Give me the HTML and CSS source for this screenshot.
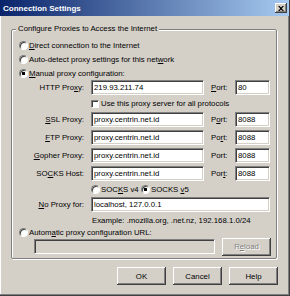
FILE: index.html
```html
<!DOCTYPE html>
<html>
<head>
    <title>Connection Settings</title>
    <link rel="stylesheet" href="styles.css">
</head>
<body>
    <div class="window">
        <div class="titlebar">
            <span class="title">Connection Settings</span>
            <span class="close">
                <svg width="6" height="5" viewBox="0 0 6 5"><path d="M0 0h1.5L3 1.6 4.5 0H6L3.8 2.5 6 5H4.5L3 3.4 1.5 5H0l2.2-2.5z" fill="#000"/></svg>
            </span>
        </div>

        <fieldset class="group">
            <legend>Configure Proxies to Access the Internet</legend>

            <label class="opt"><input type="radio" name="mode"><span><u>D</u>irect connection to the Internet</span></label>
            <label class="opt"><input type="radio" name="mode"><span>Auto-detect proxy settings for this net<u>w</u>ork</span></label>
            <label class="opt"><input type="radio" name="mode" checked><span><u>M</u>anual proxy configuration:</span></label>

            <div class="proxies">
                <span class="lbl">HTTP Pro<u>x</u>y:</span>
                <input class="field" type="text" value="219.93.211.74">
                <span><u>P</u>ort:</span>
                <input class="field" type="text" value="80">

                <label class="wide check"><input type="checkbox"><span>Use this proxy server for all protocols</span></label>

                <span class="lbl"><u>S</u>SL Proxy:</span>
                <input class="field" type="text" value="proxy.centrin.net.id">
                <span>P<u>o</u>rt:</span>
                <input class="field" type="text" value="8088">

                <span class="lbl"><u>F</u>TP Proxy:</span>
                <input class="field" type="text" value="proxy.centrin.net.id">
                <span>Po<u>r</u>t:</span>
                <input class="field" type="text" value="8088">

                <span class="lbl"><u>G</u>opher Proxy:</span>
                <input class="field" type="text" value="proxy.centrin.net.id">
                <span>Port:</span>
                <input class="field" type="text" value="8088">

                <span class="lbl">SO<u>C</u>KS Host:</span>
                <input class="field" type="text" value="proxy.centrin.net.id">
                <span>Por<u>t</u>:</span>
                <input class="field" type="text" value="8088">

                <div class="wide socks">
                    <label class="ver"><input type="radio" name="socks"><span>SOC<u>K</u>S v4</span></label>
                    <label class="ver"><input type="radio" name="socks" checked><span>SOCKS <u>v</u>5</span></label>
                </div>

                <span class="lbl"><u>N</u>o Proxy for:</span>
                <input class="field wide" type="text" value="localhost, 127.0.0.1">

                <span class="wide example">Example: .mozilla.org, .net.nz, 192.168.1.0/24</span>
            </div>

            <label class="opt short"><input type="radio" name="mode"><span>Autom<u>a</u>tic proxy configuration URL:</span></label>
            <div class="auto-url">
                <input class="field url" type="text" disabled>
                <button class="btn" disabled>R<u>e</u>load</button>
            </div>
        </fieldset>

        <div class="actions">
            <button class="btn">OK</button>
            <button class="btn">Cancel</button>
            <button class="btn">Help</button>
        </div>
    </div>
</body>
</html>
```

FILE: styles.css
```css
body { margin: 0; font-family: "Liberation Sans", Arial, sans-serif; font-size: 7.8px; color: #000; }
.window { width: 290px; height: 296px; box-sizing: border-box; background: #d4d0c8; border-right: 1px solid #404040; border-bottom: 1px solid #404040; box-shadow: inset -1px -1px #808080, inset 1px 0 #fff; }

.titlebar { height: 16px; display: flex; align-items: center; justify-content: space-between; padding: 0 2px 0 3px; background: linear-gradient(to right, #0a246a, #a6caf0); color: #fff; font-weight: bold; font-size: 8px; }
.close { width: 12px; height: 10px; box-sizing: border-box; display: flex; align-items: center; justify-content: center; background: #d4d0c8; box-shadow: inset -1px -1px #404040, inset 1px 1px #fff, inset -2px -2px #808080; }

.group { margin: 8px 12px 0 11px; padding: 4px 5px 3px 7px; border: 1px solid #808080; border-radius: 2px; box-shadow: 1px 1px 0 #fff, inset 1px 1px 0 #fff; }
.group legend { padding: 0 2px; margin-left: -3px; line-height: 10px; background: #d4d0c8; }

.opt { display: flex; align-items: center; height: 14px; }
.short { height: 12px; }

input[type="radio"] { appearance: none; box-sizing: border-box; width: 9px; height: 9px; margin: 0 1px 0 0; border-radius: 50%; border: 1px solid; border-color: #808080 #fff #fff #808080; background: #fff; box-shadow: inset 1px 1px #404040; }
input[type="radio"]:checked { background: radial-gradient(circle, #000 0 1.4px, #fff 1.9px); }
input[type="checkbox"] { appearance: none; box-sizing: border-box; width: 8px; height: 8px; margin: 0 2px 0 0; border: 1px solid; border-color: #808080 #fff #fff #808080; background: #fff; box-shadow: inset 1px 1px #404040; }

.proxies { display: grid; grid-template-columns: 65px 113px 17px 35px; column-gap: 7px; row-gap: 3px; align-items: center; }
.lbl { text-align: right; }
.wide { grid-column: 2 / 5; }
.check { display: flex; align-items: center; height: 11px; }
.socks { display: flex; align-items: center; height: 10px; }
.ver { display: flex; align-items: center; width: 50px; }
.example { height: 11px; line-height: 11px; padding-left: 1px; }

.field { box-sizing: border-box; width: 100%; height: 15px; margin: 0; padding: 0 2px; font: inherit; color: #000; background: #fff; border: 1px solid; border-color: #808080 #fff #fff #808080; box-shadow: inset 1px 1px #404040, inset -1px -1px #d4d0c8; outline: none; }
.field:disabled { background: #d4d0c8; }

.auto-url { display: flex; align-items: center; gap: 7px; height: 17px; margin-left: 15px; }
.url { width: 181px; }

.btn { box-sizing: border-box; width: 49px; height: 18px; padding: 0; font: inherit; color: #000; background: #d4d0c8; border: none; box-shadow: inset -1px -1px #404040, inset 1px 1px #fff, inset -2px -2px #808080; }
.btn:disabled { color: #808080; text-shadow: 1px 1px #fff; }

.actions { display: flex; justify-content: flex-end; gap: 7px; margin-top: 8px; padding-right: 11px; }
```
